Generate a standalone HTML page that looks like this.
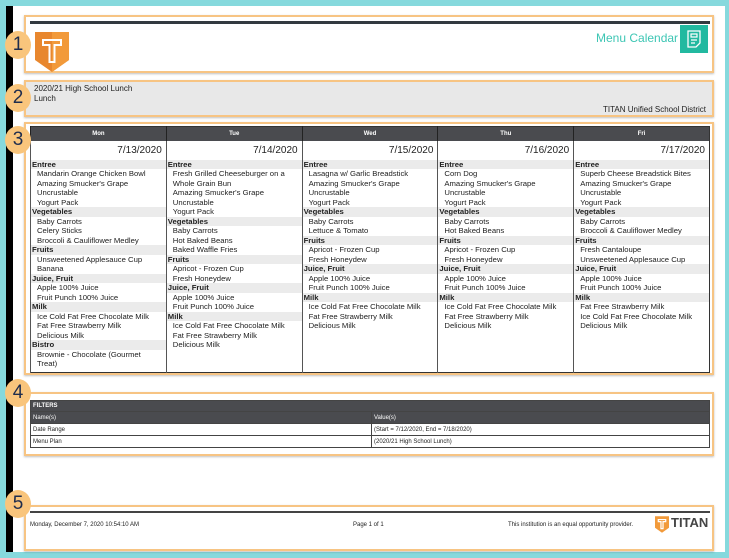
<!DOCTYPE html><html><head><style>
*{margin:0;padding:0;box-sizing:border-box}
body{width:729px;height:558px;background:#86d9dd;position:relative;overflow:hidden;font-family:"Liberation Sans",sans-serif;color:#222}
.abs{position:absolute}
.page{left:6px;top:6px;width:719px;height:546px;background:#fff;border-left:7px solid #000}
.ob{position:absolute;border:2px solid #f7c483;box-shadow:0 1px 2px rgba(0,0,0,.25)}
.num{position:absolute;width:26px;height:28px;border-radius:50%;background:#f9c57c;color:#1f2d4d;font-size:19px;text-align:center;line-height:28px;left:5px}
table{border-collapse:collapse}
.cal{position:absolute;left:30px;top:126px;width:680px;border:1px solid #333;table-layout:fixed}
.cal th{background:#4a4b4f;color:#fff;font-size:6px;height:14px;border-left:1px solid #222;font-weight:bold}
.cal td{vertical-align:top;border-left:1px solid #555;font-size:7.7px;padding:0;height:232px}
.d{text-align:right;font-size:10px;padding:4px 4px 0 0;height:19px;color:#222}
.c{background:#ebebeb;font-weight:bold;padding-left:1px;height:9.5px;line-height:9.5px}
.i{padding-left:6px;line-height:9.5px}
.f{position:absolute;left:30px;top:400px;width:680px;border:1px solid #333;font-size:6px}
.f td{height:12px;padding-left:2px;border:1px solid #444}
</style></head><body>
<div class="abs page"></div>
<div class="ob" style="left:24px;top:15px;width:690px;height:58px"></div>
<div class="abs" style="left:30px;top:21px;width:680px;height:3px;background:#333a40"></div>
<svg class="abs" style="left:35px;top:32px" width="34" height="40" viewBox="0 0 34 40"><path d="M0 0H34V28L17 40L0 28Z" fill="#e8872e"/><path d="M17 0H34V28L17 40Z" fill="#f29a3a"/><path d="M8 8H26V13H19.5V30H14.5V13H8Z" fill="none" stroke="#fff" stroke-width="2"/></svg>
<div class="abs" style="left:596px;top:31px;font-size:12px;color:#3dc6b4">Menu Calendar</div>
<div class="abs" style="left:680px;top:25px;width:28px;height:28px;background:#22b9a0"></div>
<svg class="abs" style="left:686px;top:30px" width="16" height="18" viewBox="0 0 16 18"><path d="M2 1H14V13L10 17H2Z" fill="none" stroke="#fff" stroke-width="1.3"/><path d="M5 4H11V7H5ZM5 10H11M5 13H9" fill="none" stroke="#fff" stroke-width="1.2"/></svg>
<div class="ob" style="left:24px;top:80px;width:690px;height:37px;background:#e8e8e8"></div>
<div class="abs" style="left:34px;top:84px;font-size:8px;line-height:10px">2020/21 High School Lunch<br>Lunch</div>
<div class="abs" style="right:23px;top:105px;font-size:8px">TITAN Unified School District</div>
<div class="ob" style="left:24px;top:122px;width:690px;height:253px"></div>
<table class="cal"><tr><th>Mon</th><th>Tue</th><th>Wed</th><th>Thu</th><th>Fri</th></tr><tr>
<td><div class="d">7/13/2020</div><div class="c">Entree</div><div class="i">Mandarin Orange Chicken Bowl<br>Amazing Smucker's Grape<br>Uncrustable<br>Yogurt Pack</div><div class="c">Vegetables</div><div class="i">Baby Carrots<br>Celery Sticks<br>Broccoli &amp; Cauliflower Medley</div><div class="c">Fruits</div><div class="i">Unsweetened Applesauce Cup<br>Banana</div><div class="c">Juice, Fruit</div><div class="i">Apple 100% Juice<br>Fruit Punch 100% Juice</div><div class="c">Milk</div><div class="i">Ice Cold Fat Free Chocolate Milk<br>Fat Free Strawberry Milk<br>Delicious Milk</div><div class="c">Bistro</div><div class="i">Brownie - Chocolate (Gourmet<br>Treat)</div></td>
<td><div class="d">7/14/2020</div><div class="c">Entree</div><div class="i">Fresh Grilled Cheeseburger on a<br>Whole Grain Bun<br>Amazing Smucker's Grape<br>Uncrustable<br>Yogurt Pack</div><div class="c">Vegetables</div><div class="i">Baby Carrots<br>Hot Baked Beans<br>Baked Waffle Fries</div><div class="c">Fruits</div><div class="i">Apricot - Frozen Cup<br>Fresh Honeydew</div><div class="c">Juice, Fruit</div><div class="i">Apple 100% Juice<br>Fruit Punch 100% Juice</div><div class="c">Milk</div><div class="i">Ice Cold Fat Free Chocolate Milk<br>Fat Free Strawberry Milk<br>Delicious Milk</div></td>
<td><div class="d">7/15/2020</div><div class="c">Entree</div><div class="i">Lasagna w/ Garlic Breadstick<br>Amazing Smucker's Grape<br>Uncrustable<br>Yogurt Pack</div><div class="c">Vegetables</div><div class="i">Baby Carrots<br>Lettuce &amp; Tomato</div><div class="c">Fruits</div><div class="i">Apricot - Frozen Cup<br>Fresh Honeydew</div><div class="c">Juice, Fruit</div><div class="i">Apple 100% Juice<br>Fruit Punch 100% Juice</div><div class="c">Milk</div><div class="i">Ice Cold Fat Free Chocolate Milk<br>Fat Free Strawberry Milk<br>Delicious Milk</div></td>
<td><div class="d">7/16/2020</div><div class="c">Entree</div><div class="i">Corn Dog<br>Amazing Smucker's Grape<br>Uncrustable<br>Yogurt Pack</div><div class="c">Vegetables</div><div class="i">Baby Carrots<br>Hot Baked Beans</div><div class="c">Fruits</div><div class="i">Apricot - Frozen Cup<br>Fresh Honeydew</div><div class="c">Juice, Fruit</div><div class="i">Apple 100% Juice<br>Fruit Punch 100% Juice</div><div class="c">Milk</div><div class="i">Ice Cold Fat Free Chocolate Milk<br>Fat Free Strawberry Milk<br>Delicious Milk</div></td>
<td><div class="d">7/17/2020</div><div class="c">Entree</div><div class="i">Superb Cheese Breadstick Bites<br>Amazing Smucker's Grape<br>Uncrustable<br>Yogurt Pack</div><div class="c">Vegetables</div><div class="i">Baby Carrots<br>Broccoli &amp; Cauliflower Medley</div><div class="c">Fruits</div><div class="i">Fresh Cantaloupe<br>Unsweetened Applesauce Cup</div><div class="c">Juice, Fruit</div><div class="i">Apple 100% Juice<br>Fruit Punch 100% Juice</div><div class="c">Milk</div><div class="i">Fat Free Strawberry Milk<br>Ice Cold Fat Free Chocolate Milk<br>Delicious Milk</div></td>
</tr></table>
<div class="ob" style="left:24px;top:392px;width:690px;height:64px"></div>
<table class="f"><tr><td colspan="2" style="background:#4a4b4f;color:#fff;font-weight:bold;height:11px">FILTERS</td></tr>
<tr><td style="background:#4a4b4f;color:#fff;width:341px">Name(s)</td><td style="background:#4a4b4f;color:#fff">Value(s)</td></tr>
<tr><td>Date Range</td><td>(Start = 7/12/2020, End = 7/18/2020)</td></tr>
<tr><td>Menu Plan</td><td>(2020/21 High School Lunch)</td></tr></table>
<div class="ob" style="left:24px;top:505px;width:690px;height:46px"></div>
<div class="abs" style="left:30px;top:511px;width:680px;height:2px;background:#444"></div>
<div class="abs" style="left:30px;top:522px;font-size:6px">Monday, December 7, 2020 10:54:10 AM</div>
<div class="abs" style="left:353px;top:522px;font-size:6px">Page 1 of 1</div>
<div class="abs" style="left:508px;top:522px;font-size:6px">This institution is an equal opportunity provider.</div>
<svg class="abs" style="left:655px;top:516px" width="14" height="17" viewBox="0 0 34 40"><path d="M0 0H34V28L17 40L0 28Z" fill="#f29a3a"/><path d="M8 8H26V13H19.5V30H14.5V13H8Z" fill="none" stroke="#fff" stroke-width="3"/></svg>
<div class="abs" style="left:671px;top:515px;font-size:13px;font-weight:bold;color:#444">TITAN</div>
<div class="num" style="top:31px">1</div><div class="num" style="top:84px">2</div><div class="num" style="top:126px">3</div><div class="num" style="top:379px">4</div><div class="num" style="top:490px">5</div>
</body></html>
